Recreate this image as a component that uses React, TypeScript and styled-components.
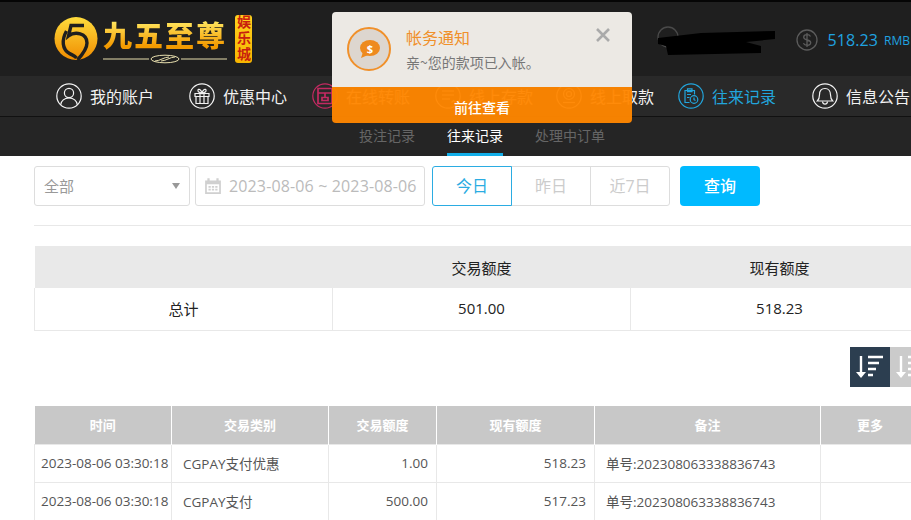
import React from "react"
import styled,{createGlobalStyle} from 'styled-components'

const Global=createGlobalStyle`
html,body{margin:0;padding:0;background:#fff;}
body{font-family:"Open Sans","Noto Sans CJK SC",sans-serif;width:911px;height:520px;overflow:hidden;}
*{box-sizing:border-box;}
`;

const Page=styled.div`
position:relative;
width:911px;
height:520px;
overflow:hidden;
`;
const TopBar=styled.header`
display:flex;
align-items:center;
height:76px;
padding-left:54px;
background:#1f1f1f;
border-top:2px solid #050505;
`;
const Logo=styled.div`
display:flex;
align-items:center;
height:74px;
`;
const LogoWords=styled.div`
display:flex;
flex-direction:column;
align-items:center;
align-self:flex-start;
margin-top:15px;
margin-left:3px;
row-gap:3px;
`;
const LogoName=styled.div`
font-family:"Noto Sans CJK SC",sans-serif;
font-size:29px;
font-weight:900;
line-height:34px;
letter-spacing:2px;
background:linear-gradient(180deg,#ffe45c 15%,#f39a00 85%);
-webkit-background-clip:text;
background-clip:text;
color:transparent;
`;
const LogoBadge=styled.div`
width:17px;
height:48px;
margin-left:8px;
border-radius:3px;
background:linear-gradient(180deg,#ffd21f,#f7b500);
color:#c8200e;
font-family:"Noto Sans CJK SC",sans-serif;
font-size:14px;
font-weight:700;
line-height:17px;
letter-spacing:2px;
writing-mode:vertical-rl;
`;
const Account=styled.div`
display:flex;
align-items:center;
margin-left:auto;
margin-right:1px;
margin-top:2px;
`;
const Masked=styled.div`
width:122px;
height:32px;
margin-right:18px;
`;
const Balance=styled.span`
margin-left:10px;
color:#1fa3e0;
font-size:16px;
letter-spacing:.1px;
`;
const Unit=styled.span`
margin-left:6px;
color:#1fa3e0;
font-size:12px;
`;
const Nav=styled.nav`
display:flex;
align-items:center;
height:41px;
padding-left:56px;
background:#292929;
border-bottom:1px solid #111;
`;
const NavItem=styled.a<{$active?:boolean;$space:number}>`
display:flex;
align-items:center;
flex:none;
column-gap:8px;
width:${p=>p.$space}px;
color:${p=>p.$active?'#22a5dc':'#f2f2f2'};
font-family:"Noto Sans CJK SC",sans-serif;
font-size:16px;
white-space:nowrap;
`;
const SubNav=styled.div`
display:flex;
column-gap:32px;
height:39px;
padding-left:359px;
background:#252525;
`;
const SubTab=styled.a<{$active?:boolean}>`
height:39px;
padding-top:8px;
color:${p=>p.$active?'#fff':'#666'};
font-family:"Noto Sans CJK SC",sans-serif;
font-size:14px;
line-height:20px;
border-bottom:3px solid ${p=>p.$active?'#12aee8':'transparent'};
`;
const Notice=styled.div`
position:absolute;
left:332px;
top:12px;
width:300px;
height:111px;
border-radius:4px;
overflow:hidden;
`;
const NoticeBody=styled.div`
display:flex;
height:75px;
padding:15px 0 0 15px;
background:#ece9e4;
`;
const NoticeText=styled.div`
margin-left:15px;
font-family:"Noto Sans CJK SC",sans-serif;
`;
const NoticeTitle=styled.div`
margin-top:-1px;
color:#f0902a;
font-size:16px;
line-height:22px;
`;
const NoticeLine=styled.div`
margin-top:4px;
color:#777;
font-size:14px;
line-height:20px;
`;
const Close=styled.svg`
position:absolute;
right:22px;
top:16px;
`;
const NoticeButton=styled.div`
height:36px;
padding-top:10px;
background:rgba(255,134,0,.96);
color:#fff;
font-family:"Noto Sans CJK SC",sans-serif;
font-size:14px;
font-weight:500;
line-height:20px;
text-align:center;
`;
const Main=styled.main`
padding:10px 0 0 34px;
width:1100px;
`;
const Filters=styled.div`
display:flex;
height:40px;
`;
const Select=styled.div`
display:flex;
align-items:center;
justify-content:space-between;
width:156px;
padding:0 10px 2px 9px;
border:1px solid #ddd;
border-radius:3px;
color:#999;
font-family:"Noto Sans CJK SC",sans-serif;
font-size:15px;
`;
const Caret=styled.span`
width:0;
height:0;
margin-right:-1px;
margin-top:2px;
border-left:4px solid transparent;
border-right:4px solid transparent;
border-top:6px solid #999;
`;
const DateBox=styled.div`
display:flex;
align-items:center;
column-gap:7px;
width:230px;
margin-left:5px;
padding-left:8px;
border:1px solid #ddd;
border-radius:3px;
color:#bbb;
font-size:16px;
letter-spacing:.14px;
white-space:nowrap;
`;
const Quick=styled.div`
display:flex;
width:238px;
margin-left:7px;
`;
const QuickBtn=styled.div<{$active?:boolean;$pos:'first'|'mid'|'last'}>`
display:flex;
align-items:center;
justify-content:center;
flex:1;
padding-bottom:2px;
margin-left:${p=>p.$pos==='first'?0:'-1px'};
border:1px solid ${p=>p.$active?'#2bace2':'#ddd'};
border-radius:${p=>p.$pos==='first'?'3px 0 0 3px':p.$pos==='last'?'0 3px 3px 0':'0'};
color:${p=>p.$active?'#2bace2':'#ccc'};
font-family:"Open Sans","Noto Sans CJK SC",sans-serif;
font-size:16px;
position:relative;
z-index:${p=>p.$active?1:0};
`;
const Search=styled.div`
display:flex;
align-items:center;
justify-content:center;
width:80px;
margin-left:10px;
padding-bottom:2px;
border-radius:4px;
background:#00baff;
color:#fff;
font-family:"Noto Sans CJK SC",sans-serif;
font-size:16px;
font-weight:500;
`;
const Divider=styled.div`
margin-top:19px;
border-top:1px solid #e8e8e8;
`;
const SummaryTable=styled.table`
width:894px;
margin-top:20px;
border-collapse:collapse;
table-layout:fixed;
color:#222;
font-family:"Open Sans","Noto Sans CJK SC",sans-serif;
font-size:15px;
`;
const SummaryHead=styled.th`
height:42px;
padding:0;
background:#e9e9e9;
font-weight:400;
`;
const SummaryCell=styled.td`
height:42px;
padding:0 0 1px;
text-align:center;
border:1px solid #e8e8e8;
border-top:0;
`;
const Sorters=styled.div`
display:flex;
margin-top:16px;
margin-left:816px;
`;
const Sorter=styled.div<{$on?:boolean}>`
display:flex;
align-items:center;
justify-content:center;
width:40px;
height:40px;
background:${p=>p.$on?'#2c3e50':'#cbcbcb'};
`;
const DetailTable=styled.table`
width:966px;
margin-top:19px;
border-collapse:collapse;
table-layout:fixed;
font-family:"Open Sans","Noto Sans CJK SC",sans-serif;
`;
const DetailHead=styled.th`
height:39px;
padding:0;
background:#c8c8c8;
border-left:1px solid #fff;
color:#fff;
font-family:"Noto Sans CJK SC",sans-serif;
font-size:13px;
font-weight:700;
&:first-child{border-left:0;}
`;
const DetailCell=styled.td<{$right?:boolean}>`
height:38px;
padding:${p=>p.$right?'0 8px 1px 0':'0 0 1px 11px'};
border:1px solid #e8e8e8;
color:#555;
font-size:13.5px;
text-align:${p=>p.$right?'right':'left'};
white-space:nowrap;
`;
const TimeCell=styled(DetailCell)`
padding:0 0 1px 6px;
`;

type IconProps={color:string}

const Ring=({color,children}:IconProps&{children?:React.ReactNode})=>(
<svg width="26" height="26" viewBox="0 0 26 26" fill="none" stroke={color} strokeWidth="1.2" style={{flex:'none'}}>
<circle cx="13" cy="13" r="12.2"/>
{children}
</svg>
)

const UserIcon=({color}:IconProps)=>(
<Ring color={color}>
<circle cx="13" cy="10" r="4.6"/>
<path d="M4.6 22c.8-4.800 4-7 8.400-7s7.600 2.200 8.400 7"/>
</Ring>
)
const GiftIcon=({color}:IconProps)=>(
<Ring color={color}>
<path d="M6 10.500h14v3H6zM7 13.500h12v7H7zM11 10.500v10M15 10.500v10"/>
<path d="M13 10c-3-.3-4.500-1.500-4-3s3-.6 4 3c1-3.600 3.500-4.500 4-3s-1 2.700-4 3z"/>
</Ring>
)
const BankIcon=({color}:IconProps)=>(
<Ring color={color}>
<path d="M6 5.500h14v15H6zM6 10h14M10 14.500h6v3h-6zM13 10v4.500" strokeWidth="1.700"/>
</Ring>
)
const DepositIcon=({color}:IconProps)=>(
<Ring color={color}>
<path d="M7 8h12M7 12h12M7 16h8M16.500 19.500l2-2 2 2"/>
</Ring>
)
const WithdrawIcon=({color}:IconProps)=>(
<Ring color={color}>
<circle cx="13" cy="11" r="5.500"/>
<circle cx="13" cy="11" r="2.500"/>
<path d="M7 19.500h12"/>
</Ring>
)
const RecordIcon=({color}:IconProps)=>(
<Ring color={color}>
<path d="M16.500 11.500V7.500h-9.500v12h4.500M9.500 5.800h4.500v2.800H9.500zM9 11.500h4M9 14.500h2.500"/>
<circle cx="16" cy="16.500" r="3.800"/>
<path d="M16 14.500v2.200l1.500.8"/>
</Ring>
)
const BellIcon=({color}:IconProps)=>(
<Ring color={color}>
<path d="M13 5.500c-3.500 0-5.500 2.700-5.500 6.200 0 3-.8 4.800-2.200 6.300h15.400c-1.400-1.500-2.200-3.300-2.200-6.300 0-3.500-2-6.200-5.500-6.200z"/>
<path d="M10.500 18.500c.2 1.800 1.200 2.700 2.500 2.700s2.300-.9 2.500-2.700"/>
</Ring>
)
const DollarRing=()=>(
<svg width="22" height="22" viewBox="0 0 22 22" fill="none" stroke="#5c5c5c" strokeWidth="1.300">
<circle cx="11" cy="11" r="10"/>
<path d="M14.500 7.500c-.6-1.300-2-1.800-3.500-1.800-1.900 0-3.300 1-3.300 2.600 0 3.500 7 1.900 7 5.300 0 1.700-1.600 2.700-3.500 2.700-1.700 0-3.100-.7-3.800-2.100M11 4v14"/>
</svg>
)

const navItems=[
{label:'我的账户',Icon:UserIcon,space:133},
{label:'优惠中心',Icon:GiftIcon,space:123},
{label:'在线转账',Icon:BankIcon,space:123,color:'#c42a62'},
{label:'线上存款',Icon:DepositIcon,space:121},
{label:'线上取款',Icon:WithdrawIcon,space:122},
{label:'往来记录',Icon:RecordIcon,space:134,active:true},
{label:'信息公告',Icon:BellIcon,space:110},
]

const rows=[
{time:'2023-08-06 03:30:18',kind:'CGPAY支付优惠',amount:'1.00',balance:'518.23',note:'单号:202308063338836743'},
{time:'2023-08-06 03:30:18',kind:'CGPAY支付',amount:'500.00',balance:'517.23',note:'单号:202308063338836743'},
]

const App=()=>{
    return(
        <Page>
        <Global/>
        <TopBar>
        <Logo>
        <svg width="46" height="46" viewBox="0 0 46 46" fill="none">
        <defs>
        <linearGradient id="coin" x1="0" y1="0" x2="0" y2="1">
        <stop offset="0" stopColor="#ffdc3c"/>
        <stop offset="1" stopColor="#f08c00"/>
        </linearGradient>
        </defs>
        <circle cx="22" cy="22.500" r="21.500" fill="url(#coin)"/>
        <path d="M30 9.500H17L14.500 20C21 15 33 17 33 27c0 6-5 12-9.500 17" stroke="#1f1f1f" strokeWidth="3.400"/>
        <path d="M12.500 15C7.500 24 8 33 15.500 37.500c3 1.800 5 2 7 4.500" stroke="#1f1f1f" strokeWidth="3.400"/>
        </svg>
        <LogoWords>
        <LogoName>九五至尊</LogoName>
        <svg width="124" height="10" viewBox="0 0 124 10" fill="none" stroke="#e8dfae" strokeWidth="1">
        <path d="M0 5h46M78 5h46"/>
        <ellipse cx="62" cy="5" rx="14" ry="3.800"/>
        <path d="M52 7c5 0 9-4 14-4M58 7c5 0 9-4 14-4"/>
        </svg>
        </LogoWords>
        <LogoBadge>娱乐城</LogoBadge>
        </Logo>
        <Account>
        <Masked>
        <svg width="122" height="32" viewBox="0 0 122 32">
        <circle cx="12" cy="13" r="10" fill="none" stroke="#4a4a4a" strokeWidth="1.300"/>
        <path d="M2 14l43-5 74-2v8l-29 3 15 4v7l-93 2-2-9-8-2z" fill="#000"/>
        </svg>
        </Masked>
        <DollarRing/>
        <Balance>518.23</Balance>
        <Unit>RMB</Unit>
        </Account>
        </TopBar>
        <Nav>
        {navItems.map((item)=>{
            const color=item.color||(item.active?'#22a5dc':'#f2f2f2')
            return(
              <NavItem key={item.label} $active={item.active} $space={item.space}>
              <item.Icon color={color}/>
              <span>{item.label}</span>
              </NavItem>
            )
        })}
        </Nav>
        <SubNav>
        <SubTab>投注记录</SubTab>
        <SubTab $active>往来记录</SubTab>
        <SubTab>处理中订单</SubTab>
        </SubNav>
        <Notice>
        <NoticeBody>
        <svg width="44" height="44" viewBox="0 0 44 44" style={{flex:'none'}}>
        <circle cx="22" cy="22" r="21" fill="#ddd6cf" stroke="#f0902a" strokeWidth="2"/>
        <ellipse cx="23" cy="21" rx="10" ry="8" fill="#ee8a1e"/>
        <path d="M16 25l-2 6 7-3z" fill="#ee8a1e"/>
        <text x="23" y="25.500" textAnchor="middle" fontSize="11" fontWeight="700" fill="#fff" fontFamily="Open Sans">$</text>
        </svg>
        <NoticeText>
        <NoticeTitle>帐务通知</NoticeTitle>
        <NoticeLine>亲~您的款项已入帐。</NoticeLine>
        </NoticeText>
        </NoticeBody>
        <Close width="14" height="14" viewBox="0 0 14 14" stroke="#aaa" strokeWidth="2.600">
        <path d="M1 1l12 12M13 1L1 13"/>
        </Close>
        <NoticeButton>前往查看</NoticeButton>
        </Notice>
        <Main>
        <Filters>
        <Select>全部<Caret/></Select>
        <DateBox>
        <svg width="18" height="18" viewBox="0 0 16 16" fill="#d0d0d0" style={{flex:'none'}}>
        <path d="M1 3h2V1h2v2h6V1h2v2h2v12H1zM2.500 6.500v7h11v-7zM4 8h2v1.500H4zM7 8h2v1.500H7zM10 8h2v1.500h-2zM4 10.500h2V12H4zM7 10.500h2V12H7zM10 10.500h2V12h-2z"/>
        </svg>
        <span>2023-08-06 ~ 2023-08-06</span>
        </DateBox>
        <Quick>
        <QuickBtn $active $pos="first">今日</QuickBtn>
        <QuickBtn $pos="mid">昨日</QuickBtn>
        <QuickBtn $pos="last">近7日</QuickBtn>
        </Quick>
        <Search>查询</Search>
        </Filters>
        <Divider/>
        <SummaryTable>
        <thead>
        <tr>
        <SummaryHead style={{width:298}}></SummaryHead>
        <SummaryHead style={{width:298}}>交易额度</SummaryHead>
        <SummaryHead style={{width:298}}>现有额度</SummaryHead>
        </tr>
        </thead>
        <tbody>
        <tr>
        <SummaryCell>总计</SummaryCell>
        <SummaryCell>501.00</SummaryCell>
        <SummaryCell>518.23</SummaryCell>
        </tr>
        </tbody>
        </SummaryTable>
        <Sorters>
        <Sorter $on>
        <svg width="30" height="26" viewBox="0 0 30 26" fill="none" stroke="#fff" strokeWidth="2.400">
        <path d="M6 2v19"/>
        <path d="M1 18h10l-5 6z" fill="#fff" stroke="none"/>
        <path d="M13 3h15M13 9h11M13 15h8M13 21h5"/>
        </svg>
        </Sorter>
        <Sorter>
        <svg width="30" height="26" viewBox="0 0 30 26" fill="none" stroke="#fff" strokeWidth="2.400">
        <path d="M6 2v19"/>
        <path d="M1 18h10l-5 6z" fill="#fff" stroke="none"/>
        <path d="M13 3h5M13 9h8M13 15h11M13 21h15"/>
        </svg>
        </Sorter>
        </Sorters>
        <DetailTable>
        <colgroup>
        <col style={{width:137}}/>
        <col style={{width:157}}/>
        <col style={{width:108}}/>
        <col style={{width:158}}/>
        <col style={{width:226}}/>
        <col style={{width:180}}/>
        </colgroup>
        <thead>
        <tr>
        <DetailHead>时间</DetailHead>
        <DetailHead>交易类别</DetailHead>
        <DetailHead>交易额度</DetailHead>
        <DetailHead>现有额度</DetailHead>
        <DetailHead>备注</DetailHead>
        <DetailHead style={{textAlign:'left',paddingLeft:36}}>更多</DetailHead>
        </tr>
        </thead>
        <tbody>
        {rows.map((row,key)=>{
            return(
              <tr key={key}>
              <TimeCell>{row.time}</TimeCell>
              <DetailCell>{row.kind}</DetailCell>
              <DetailCell $right>{row.amount}</DetailCell>
              <DetailCell $right>{row.balance}</DetailCell>
              <DetailCell>{row.note}</DetailCell>
              <DetailCell></DetailCell>
              </tr>
            )
        })}
        </tbody>
        </DetailTable>
        </Main>
        </Page>
    )
}
export default App;
